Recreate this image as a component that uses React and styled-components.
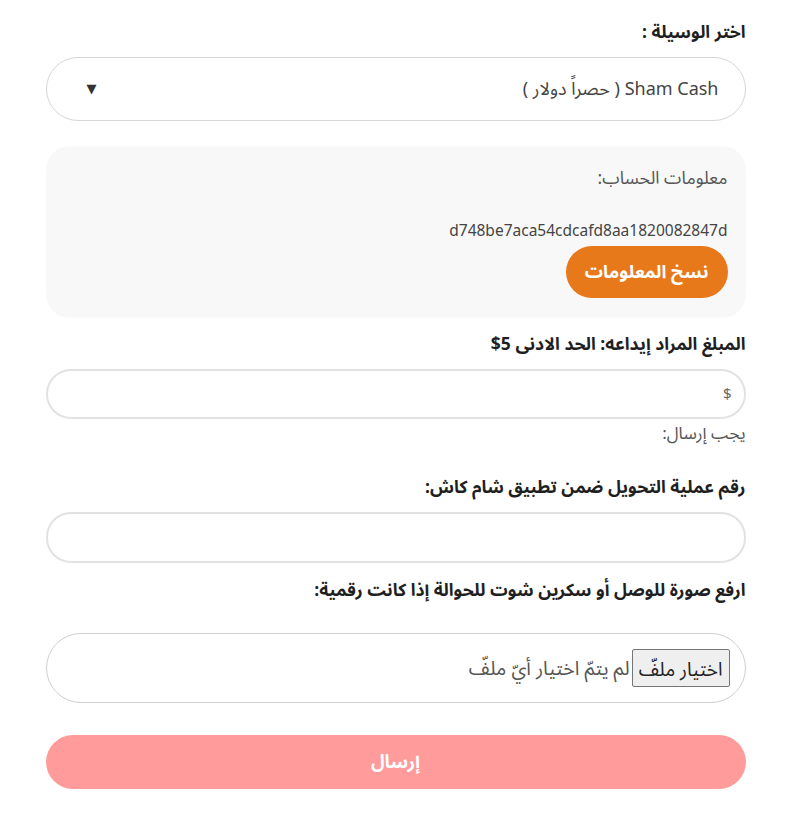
import styled, { createGlobalStyle } from "styled-components";

const GlobalStyle = createGlobalStyle`
    body {
        margin: 0;
        background: #ffffff;
        font-family: "Noto Sans Arabic", "Noto Sans", "DejaVu Sans", sans-serif;
        color: #222;
    }
`

const Form = styled.form`
    direction: rtl;
    width: 700px;
    margin: 0 auto;
    padding: 23px 0 28px;
    display: flex;
    flex-direction: column;
`
const Label = styled.div`
    font-size: 17.5px;
    font-weight: bold;
    line-height: 20px;
    color: #1f1f1f;
    margin-top: ${props => props.$top || 0}px;
    margin-bottom: ${props => props.$bottom || 14}px;
`
const SelectBox = styled.div`
    height: 64px;
    box-sizing: border-box;
    border: 1px solid #d6d6d6;
    border-radius: 32px;
    display: flex;
    align-items: center;
    justify-content: space-between;
    padding: 0 26px 0 40px;
    font-size: 18px;
    color: #444;
    cursor: pointer;
`
const Arrow = styled.span`
    font-size: 13px;
    color: #333;
`
const InfoBox = styled.div`
    margin-top: 25px;
    background: #f8f8f8;
    border-radius: 24px;
    padding: 24px 18px 20px;
    display: flex;
    flex-direction: column;
    align-items: flex-start;
`
const InfoTitle = styled.div`
    font-size: 17.5px;
    line-height: 18px;
    color: #555;
`
const InfoValue = styled.div`
    direction: ltr;
    align-self: flex-start;
    margin-top: 34px;
    font-size: 15.5px;
    line-height: 18px;
    color: #444;
`
const CopyBtn = styled.button`
    margin-top: 6px;
    width: 162px;
    height: 52px;
    border: none;
    border-radius: 26px;
    background: #e8791b;
    color: #fff;
    font-family: inherit;
    font-size: 18px;
    font-weight: bold;
    cursor: pointer;
`
const Input = styled.input`
    height: ${props => props.$height || 50}px;
    box-sizing: border-box;
    border: 2px solid #e2e2e2;
    border-radius: 25px;
    padding: 0 12px;
    font-family: inherit;
    font-size: 15px;
    color: #333;
    outline: none;
    &::placeholder {
        color: #666;
    }
`
const Hint = styled.div`
    margin-top: 6px;
    font-size: 17px;
    line-height: 18px;
    color: #555;
`
const FileBox = styled.div`
    height: 70px;
    box-sizing: border-box;
    border: 1px solid #cfcfcf;
    border-radius: 35px;
    display: flex;
    align-items: center;
    padding: 0 15px;
    gap: 2px;
`
const FileBtn = styled.button`
    height: 38px;
    padding: 0 6px;
    background: #efefef;
    border: 1px solid #767676;
    border-radius: 2px;
    font-family: inherit;
    font-size: 19px;
    color: #222;
`
const FileName = styled.span`
    font-size: 19.5px;
    color: #555;
`
const SubmitBtn = styled.button`
    margin-top: 32px;
    height: 54px;
    border: none;
    border-radius: 27px;
    background: #ff9b9b;
    color: #fff;
    font-family: inherit;
    font-size: 18.5px;
    font-weight: bold;
`

export default function App(){
    return <>
        <GlobalStyle />
        <Form onSubmit={e => e.preventDefault()}>
            <Label>اختر الوسيلة :</Label>
            <SelectBox>
                <span>Sham Cash ( حصراً دولار )</span>
                <Arrow>▼</Arrow>
            </SelectBox>
            <InfoBox>
                <InfoTitle>معلومات الحساب:</InfoTitle>
                <InfoValue>d748be7aca54cdcafd8aa1820082847d</InfoValue>
                <CopyBtn type="button">نسخ المعلومات</CopyBtn>
            </InfoBox>
            <Label $top={17}>المبلغ المراد إيداعه: الحد الادنى 5$</Label>
            <Input type="text" placeholder="$" />
            <Hint>يجب إرسال:</Hint>
            <Label $top={35}>رقم عملية التحويل ضمن تطبيق شام كاش:</Label>
            <Input type="text" $height={51} />
            <Label $top={18} $bottom={32}>ارفع صورة للوصل أو سكرين شوت للحوالة إذا كانت رقمية:</Label>
            <FileBox>
                <FileBtn type="button">اختيار ملفّ</FileBtn>
                <FileName>لم يتمّ اختيار أيّ ملفّ</FileName>
            </FileBox>
            <SubmitBtn type="submit" disabled>إرسال</SubmitBtn>
        </Form>
    </>
}
